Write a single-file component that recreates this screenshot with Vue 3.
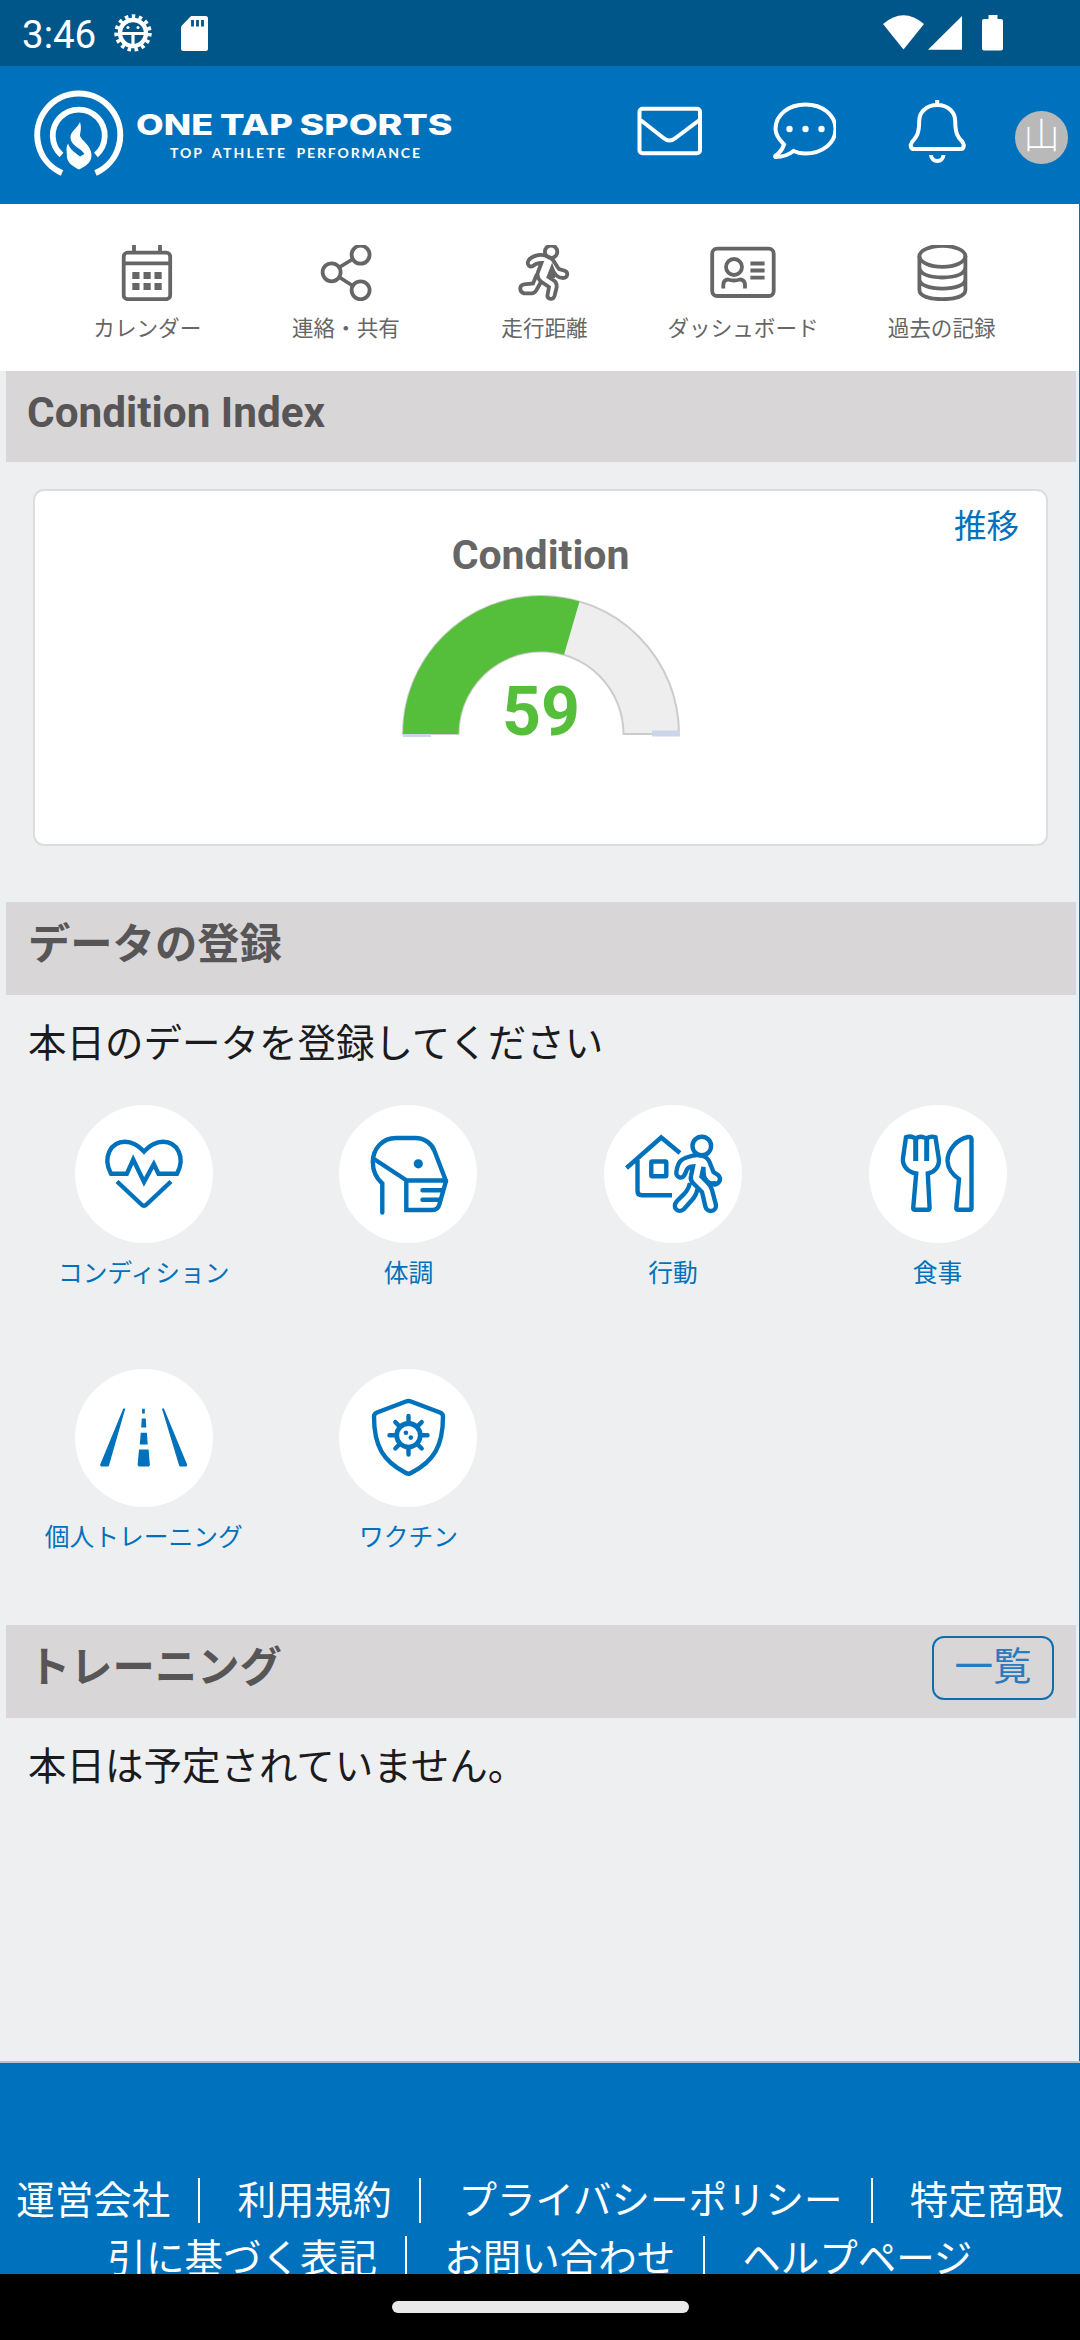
<template>
    <div class="app">
        <div class="status-bar">
            <span class="clock">3:46</span>
            <svg class="status-gear" width="40" height="40" viewBox="0 0 40 40">
                <circle cx="20" cy="20" r="13" fill="none" stroke="#fff" stroke-width="4.4"/>
                <circle cx="20" cy="20" r="16.7" fill="none" stroke="#fff" stroke-width="4" stroke-dasharray="3.5 3.5"/>
                <path d="M8 20.500h24M20 21v12" stroke="#fff" stroke-width="3.2"/>
                <circle cx="15" cy="14.500" r="1.500" fill="#fff"/>
                <circle cx="25" cy="14.500" r="1.500" fill="#fff"/>
            </svg>
            <svg class="status-sd" width="27" height="35" viewBox="0 0 27 35">
                <path d="M10 0H24.500Q27 0 27 2.500V32.500Q27 35 24.500 35H2.500Q0 35 0 32.500V10.500Z" fill="#fff"/>
                <path d="M11.500 4v6.500M16.500 4v6.500M21.500 4v6.500" stroke="#005589" stroke-width="2.800"/>
            </svg>
            <svg class="status-signal" width="120" height="36" viewBox="0 0 120 36">
                <path d="M0 9Q20.500-8.500 41 9L20.500 34.500Z" fill="#fff"/>
                <path d="M45 34.700L79 1V34.700Z" fill="#fff"/>
                <path d="M105.500 0h9v4h3.500q2 0 2 2v27.500q0 2-2 2h-17q-2 0-2-2V6q0-2 2-2h4.500z" fill="#fff"/>
            </svg>
        </div>

        <header class="header">
            <svg class="logo" width="430" height="100" viewBox="30 85 430 100">
                <g fill="none" stroke="#fff">
                    <path d="M62 173A41.500 41.500 0 1 1 95.500 173" stroke-width="6"/>
                    <path d="M61.500 155A26 26 0 1 1 96 155" stroke-width="5.800"/>
                </g>
                <path d="M80 122C82 129 80 132 80 136C82 141 91 145 91.500 155C92 163 84 167 79 169.500C74 167 66 163 66.800 154C66.500 150 66 147 68 143.500C70 150 76 153 80 156.500L84.500 154C81 148 71 146 70.500 138C70 131 78 128 80 122Z" fill="#fff"/>
                <g class="brand">
                    <text x="136" y="134.500" textLength="77" lengthAdjust="spacingAndGlyphs">ONE</text>
                    <text x="220" y="134.500" textLength="73" lengthAdjust="spacingAndGlyphs">TAP</text>
                    <text x="299.500" y="134.500" textLength="153" lengthAdjust="spacingAndGlyphs">SPORTS</text>
                </g>
                <g class="tagline">
                    <text x="170" y="158" textLength="32">TOP</text>
                    <text x="212" y="158" textLength="73">ATHLETE</text>
                    <text x="296.500" y="158" textLength="123.500">PERFORMANCE</text>
                </g>
            </svg>
            <div class="header-icons">
                <svg width="66" height="66" viewBox="635.5 98 66 66">
                    <rect x="639" y="108.700" width="60.500" height="44.600" rx="3"/>
                    <path d="M640 120L663 138Q669 143 675 138L699 120"/>
                </svg>
                <svg width="66" height="66" viewBox="769.5 98 66 66">
                    <path d="M783.500 144.500C778 139 775 134 775 129C775 115 788 104.500 805 104.500S835 115 835 129S822 153.500 805 153.500C800 153.500 796 152.500 793 151C788 155 781 157 775 157Q774 156 776 155C780 152 782 149 783.500 144.500Z"/>
                    <g fill="#fff" stroke="none">
                        <circle cx="789" cy="129" r="3.200"/>
                        <circle cx="805" cy="129" r="3.200"/>
                        <circle cx="821" cy="129" r="3.200"/>
                    </g>
                </svg>
                <svg width="66" height="66" viewBox="903.5 98 66 66">
                    <path d="M936.700 100V105M936.700 105C925 105 918.700 113 918.700 121C918.700 134 916 137 911.500 142C909 146 910.500 149 913.500 149H960C963 149 964.500 146 962 142C957.500 137 954.700 134 954.700 121C954.700 113 948.500 105 936.700 105ZM930.500 155C931 163 942.500 163 943 155"/>
                </svg>
            </div>
            <div class="avatar">山</div>
        </header>

        <main class="content">
            <nav class="menu">
                <div v-for="item in menu" :key="item.label" class="menu-item">
                    <svg width="66" height="56" viewBox="0 0 66 56" v-html="item.icon"></svg>
                    <span>{{ item.label }}</span>
                </div>
            </nav>

            <div class="section-bar index-bar">Condition Index</div>
            <section class="card">
                <a class="trend">推移</a>
                <h3>Condition</h3>
                <svg class="gauge" width="280" height="146" viewBox="0 0 280 146">
                    <path :d="arc(0, 1)" fill="#eeeeee" stroke="#cccccc" stroke-width="2"/>
                    <path :d="arc(0, score / 100)" fill="#55bf3b"/>
                    <path d="M2 141.500h28" stroke="#ccd6eb" stroke-width="3"/>
                    <path d="M251 139.500h28" stroke="#ccd6eb" stroke-width="6"/>
                    <text x="140" y="141" text-anchor="middle">{{ score }}</text>
                </svg>
            </section>

            <div class="section-bar">データの登録</div>
            <p class="message">本日のデータを登録してください</p>
            <div class="entries">
                <a v-for="entry in entries" :key="entry.label" class="entry">
                    <svg width="138" height="138" viewBox="0 0 138 138" v-html="entry.icon"></svg>
                    <span>{{ entry.label }}</span>
                </a>
            </div>

            <div class="section-bar training-bar">
                <span>トレーニング</span>
                <button class="list-button">一覧</button>
            </div>
            <p class="message">本日は予定されていません。</p>
        </main>

        <footer class="footer">
            <a v-for="link in links" :key="link">{{ link }}</a>
        </footer>
        <div class="gesture-bar"><i></i></div>
    </div>
</template>

<script setup>
const score = 59

// half-ring segment of the gauge, from and to are 0..1
const arc = (from, to) => {
    const point = (r, v) => {
        const a = Math.PI * (1 - v)
        return `${(140 + r * Math.cos(a)).toFixed(2)} ${(140 - r * Math.sin(a)).toFixed(2)}`
    }
    return `M${point(138, from)}A138 138 0 0 1 ${point(138, to)}L${point(82.5, to)}A82.5 82.5 0 0 0 ${point(82.5, from)}Z`
}

const menu = [
    {
        label: 'カレンダー',
        icon: `<rect x="9.700" y="7.700" width="46.500" height="46.500" rx="4"/><path d="M9 18.300H57M20 0V7M46 0V7"/>
            <path d="M18.300 30.500h7.200M29.500 30.500h7.200M40.500 30.500h7.200M18.300 41.500h7.200M29.500 41.500h7.200M40.500 41.500h7.200" stroke-width="7"/>`
    },
    {
        label: '連絡・共有',
        icon: `<circle cx="47.600" cy="9.700" r="9"/><circle cx="18.600" cy="27.300" r="9"/><circle cx="47.600" cy="45.300" r="9"/>
            <path d="M26 22.500L40 14M26 32L40 41"/>`
    },
    {
        label: '走行距離',
        icon: `<circle cx="40.100" cy="6.700" r="6.200"/>
            <path d="M22 21C19 22.500 16 20 17 17C18 12 28 8.500 34 10.500C44 13 44 20 48 24L53 25.500C58 27 57 33 52 33C46 33 43 29 41 23L37.500 32L43.500 36C46 38 46 40 45.500 43L43.500 51C42 55.500 36 54.500 36.500 50L38 42L30 36.500C26 33 26 30 27 27L30.500 18C27 18 24.500 18.500 22 21Z"/>
            <path d="M26 29L22 38.500L13 39.300C8 40 8 47 13 48.300L21 48.300Q24 48 25.500 45L30 37M40 27V31L44 31"/>`
    },
    {
        label: 'ダッシュボード',
        icon: `<rect x="2.200" y="3.700" width="61.500" height="47.300" rx="5"/><circle cx="24" cy="22" r="8"/>
            <path d="M13.300 43.500V40Q13.300 35 18 34.500Q24 36.500 30 34.500Q35 35 35 40V43.500M40.400 18.500H54.600M40.400 25.500H54.600M40.400 32.700H54.600"/>`
    },
    {
        label: '過去の記録',
        icon: `<ellipse cx="33.400" cy="11.300" rx="23" ry="10.500"/>
            <path d="M10.400 11V45C10.400 51 20 54.200 33.400 54.200S56.400 51 56.400 45V11M10.400 22C10.400 29 20 32.500 33.400 32.500S56.400 29 56.400 22M10.400 34C10.400 40 20 43.700 33.400 43.700S56.400 40 56.400 34"/>`
    }
]

const entries = [
    {
        label: 'コンディション',
        icon: `<path d="M36 68.800C27 52 36 36.700 50 36.700C58 36.700 64 41 69 46.500C74 41 80 36.700 88 36.700C102 36.700 111 52 102 68.800H83.500L78.800 59L69 77L58.200 54.500L51.800 68.800Z"/>
            <path d="M42 76.500L66.500 99.500Q69 102 71.500 99.500L96 76.500"/>`
    },
    {
        label: '体調',
        icon: `<path d="M43.300 107.500V78.500C35 71 33.800 64 33.800 57C34 43 44 33 57 33H76C86 33 93 39 95.500 46L107 76L100.500 99Q99 105 93.500 105H67.300V75.500H107M67 75L35 54M83.500 85.200H103M83.500 94.800H100" stroke-linecap="round"/>
            <circle cx="79.300" cy="58.800" r="4.600" fill="#0072bc" stroke="none"/>`
    },
    {
        label: '行動',
        icon: `<path d="M22.500 63L57.200 32.500L76 48M33.500 55V86Q33.500 90.300 38 90.300H68"/>
            <rect x="47.300" y="56.500" width="15" height="14.800" rx="1"/>
            <circle cx="97.800" cy="41" r="9.300"/>
            <path d="M81 69C79 75 71 73 72.500 66C74 57 77 54 84 52C95 48 103 51 105.500 57L109.500 67L114 70C119 74 114 81 108 79C101 77 99 72 99.500 62L97.500 71.500L104 78Q107 81 108 85L112 100C112.500 107 103 108 101.500 102L98 87L89 78Q86 75 87 71L89 61.500Q84 62 83 64.500Z"/>
            <path d="M86 78C84 86 81 88 73 96C67 103 75 109 80 104L88 95Q92 91 93.500 84M99 72L105 79L112 78" stroke-linejoin="round"/>`
    },
    {
        label: '食事',
        icon: `<path d="M37 32.300Q41 30.500 44.500 32.500Q47 33.500 49 32.300Q52 31 55 32.500Q58 33.500 60 32.300Q63 31 66.500 32.300L69.700 53C71 61 66 67 58.800 68.500L60.600 103Q60.500 104.800 59 104.800H46Q44.200 104.800 44.200 103L47.200 68.500C39 67 33 61 34 53Z"/>
            <path d="M46.700 33V56M57.700 33V56" stroke-width="5"/>
            <path d="M102.500 34Q102 31.500 99 32C88 34 78.500 45 78.500 56C79 65 84 70 90 74L87.300 103Q87.300 104.800 89 104.800H101Q102.500 104.800 102.500 103Z"/>`
    },
    {
        label: '個人トレーニング',
        icon: `<path d="M48.300 39.500H50.300L34 96.500L33.200 97.500H26L25 96ZM86.900 39.500H88.900L112.300 96L111.400 97.500H105L104.100 96.500ZM67.200 39.800H69.800V44.500H67ZM66.700 49.500H70.800L71.300 58.500H66.200ZM65.700 63.800H71.900L72.700 75.500H64.800ZM64 80.500H73.600L74.900 96L74 97.500H63.700L62.600 96Z" fill="#0072bc" stroke="none"/>`
    },
    {
        label: 'ワクチン',
        icon: `<path d="M67 32.500Q69.500 31.500 72 32.500L101 43.500Q104 44.800 104 47.500C104 77 95 92 72 104Q69.500 105.500 67 104C44 92 35 77 35 47.500Q35 44.800 38 43.500Z"/>
            <circle cx="69.500" cy="66.300" r="11.800" stroke-width="4.800"/>
            <path d="M69.500 54V47M69.500 78.500V85.500M57 66.300H50.500M82 66.300H88.500M60.800 57.600L56.300 53.100M78.200 57.600L82.700 53.100M60.800 75L56.300 79.500M78.200 75L82.700 79.500" stroke-linecap="round"/>
            <g fill="#0072bc" stroke="none"><circle cx="66.900" cy="63.700" r="2.300"/><circle cx="71.800" cy="68.600" r="2.300"/></g>`
    }
]

const links = ['運営会社', '利用規約', 'プライバシーポリシー', '特定商取引に基づく表記', 'お問い合わせ', 'ヘルプページ']
</script>

<style>
body {
    margin: 0;
    overflow: hidden;
}
</style>

<style scoped>
.app {
    width: 1080px;
    height: 2340px;
    display: flex;
    flex-direction: column;
    overflow: hidden;
    font-family: Roboto, "Noto Sans CJK JP", sans-serif;
    font-size: 38.5px;
    background: #0072bd;
}

svg {
    display: block;
    flex: none;
}

.status-bar {
    height: 66px;
    flex: none;
    display: flex;
    align-items: center;
    padding: 0 77px 0 22px;
    background: #005589;
    color: #fff;
}

.clock {
    width: 75px;
    margin-top: 3px;
}

.status-gear {
    margin-left: 16px;
}

.status-sd {
    margin-left: 28px;
}

.status-signal {
    margin-left: auto;
    margin-bottom: 1px;
}

.header {
    height: 138px;
    flex: none;
    display: flex;
    align-items: center;
    padding-left: 30px;
}

.brand {
    fill: #fff;
    font: 800 29px Inter, sans-serif;
}

.tagline {
    fill: #fff;
    font: 700 14px Lato, sans-serif;
}

.header-icons {
    display: flex;
    gap: 68px;
    margin-left: 176px;
    margin-bottom: 8px;
    fill: none;
    stroke: #fff;
    stroke-width: 4px;
}

.avatar {
    width: 53px;
    height: 53px;
    margin-left: 45px;
    margin-top: 4px;
    border-radius: 50%;
    background: #b9b9b9;
    color: #fff;
    font-size: 36px;
    font-weight: 300;
    line-height: 53px;
    text-align: center;
}

.content {
    height: 1857px;
    flex: none;
    margin-right: 1px;
    background: #eeeff1;
}

.menu {
    height: 167px;
    box-sizing: border-box;
    display: grid;
    grid-template-columns: repeat(5, 198.6px);
    padding: 41px 0 0 48px;
    background: #fff;
}

.menu-item {
    display: flex;
    flex-direction: column;
    align-items: center;
    color: #666;
    font-size: 21.6px;
}

.menu-item svg {
    fill: none;
    stroke: #666;
    stroke-width: 3.8px;
}

.menu-item span {
    margin-top: 11px;
    line-height: 34px;
    white-space: nowrap;
}

.section-bar {
    box-sizing: border-box;
    height: 93px;
    margin: 0 3px 0 6px;
    padding: 0 22px;
    background: #d8d6d7;
    color: #575556;
    font-size: 42.3px;
    font-weight: 700;
    line-height: 86px;
}

.index-bar {
    height: 91px;
    padding-left: 21px;
    line-height: 83px;
}

.card {
    box-sizing: border-box;
    width: 1015px;
    height: 357px;
    margin: 27px 0 56px 33px;
    display: flex;
    flex-direction: column;
    align-items: center;
    border: 2px solid #dcddde;
    border-radius: 11px;
    background: #fff;
}

.trend {
    align-self: flex-end;
    margin: 13px 27px 0 0;
    color: #0072bc;
    font-size: 32.5px;
    line-height: 46px;
}

.card h3 {
    margin: -18px 0 0;
    color: #666;
    font-size: 41px;
    line-height: 46px;
}

.gauge {
    margin-top: 16px;
    overflow: visible;
}

.gauge text {
    fill: #55bf3b;
    font-size: 68px;
    font-weight: 700;
}

.message {
    margin: 20px 0 0 28px;
    color: #1b1b1d;
    line-height: 58px;
}

.entries {
    display: grid;
    grid-template-columns: repeat(4, 264.6px);
    grid-auto-rows: 264px;
    margin: 32px 0 -8px 11.5px;
}

.entry {
    display: flex;
    flex-direction: column;
    align-items: center;
    color: #0072bc;
    font-size: 24.75px;
}

.entry svg {
    border-radius: 50%;
    background: #fff;
    fill: none;
    stroke: #0072bc;
    stroke-width: 4.4px;
}

.entry span {
    margin-top: 12px;
    line-height: 37px;
    white-space: nowrap;
}

.training-bar {
    display: flex;
    align-items: flex-start;
    justify-content: space-between;
}

.list-button {
    box-sizing: border-box;
    width: 122px;
    height: 64px;
    margin-top: 11px;
    padding: 0 0 3px;
    border: 2px solid #0f6fae;
    border-radius: 12px;
    background: none;
    color: #2a7abc;
    font-family: inherit;
    font-size: 38.5px;
    line-height: 57px;
}

.footer {
    height: 211px;
    flex: none;
    border-top: 2px solid #b2c7d1;
    color: #fff;
    line-height: 58px;
    text-align: center;
    overflow: hidden;
}

.footer::before {
    content: "";
    display: block;
    height: 109px;
}

.footer a:not(:last-child) {
    margin-right: 37px;
    padding-right: 28px;
    border-right: 2px solid #fff;
}

.gesture-bar {
    height: 66px;
    flex: none;
    display: flex;
    align-items: center;
    justify-content: center;
    background: #000;
}

.gesture-bar i {
    width: 297px;
    height: 12px;
    border-radius: 6px;
    background: #e9e9e9;
}
</style>
